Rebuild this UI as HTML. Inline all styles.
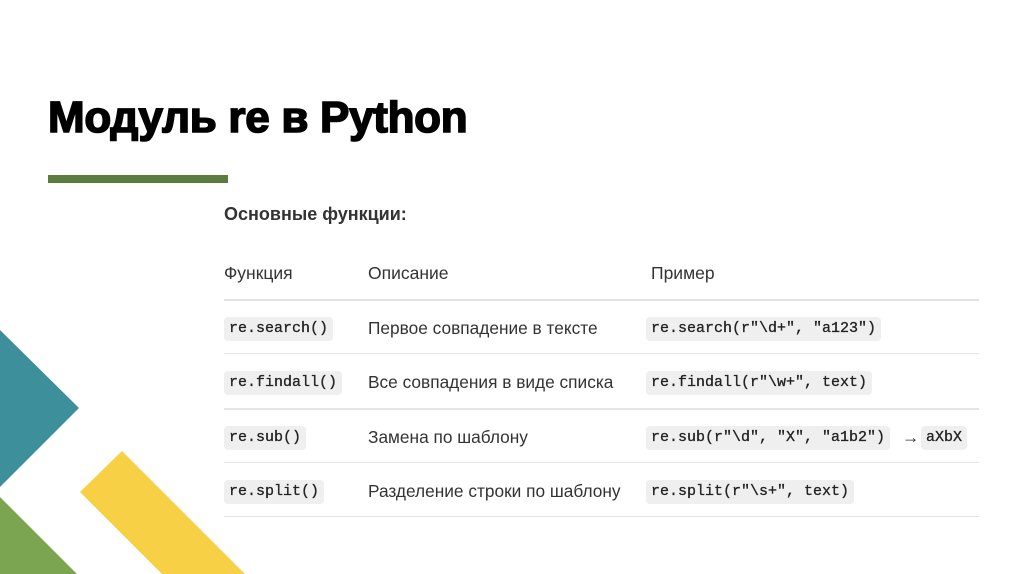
<!DOCTYPE html>
<html><head><meta charset="utf-8"><style>
*{margin:0;padding:0;box-sizing:border-box}
body{width:1024px;height:574px;background:#fff;position:relative;overflow:hidden;font-family:"Liberation Sans","DejaVu Sans",sans-serif;color:#333}
.t{position:absolute;white-space:nowrap}
h1{position:absolute;left:48px;top:96px;font-size:44px;font-weight:bold;color:#000;-webkit-text-stroke:1.6px #000;letter-spacing:-0.3px;white-space:nowrap;line-height:1}
.bar{position:absolute;left:48px;top:175px;width:180px;height:8px;background:#5a7d3f}
.sub{left:224px;top:204px;font-size:18px;font-weight:bold;color:#333}
.h{top:263px;font-size:17.5px;color:#333}
.line{position:absolute;left:224px;width:755px;height:1px;background:#e4e4e4}
.code{position:absolute;font-family:"Liberation Mono",monospace;font-size:15px;background:#efefef;border-radius:4px;padding:3px 5px;color:#222;white-space:nowrap;line-height:18px;-webkit-text-stroke:0.3px #222}
.d{font-size:17.3px;color:#333}
</style></head><body>
<svg width="260" height="574" style="position:absolute;left:0;top:0">
<polygon points="0,330 79,408 0,487" fill="#3d8f9c"/>
<polygon points="0,497 77,574 0,574" fill="#7ca552"/>
<polygon points="122,451 245,574 162,574 80,492" fill="#f7d046"/>
</svg>
<h1>Модуль re в Python</h1>
<div class="bar"></div>
<div class="t sub">Основные функции:</div>
<div class="t h" style="left:224px">Функция</div>
<div class="t h" style="left:368px">Описание</div>
<div class="t h" style="left:651px">Пример</div>
<div class="line" style="top:299px;height:2px"></div>

<div class="code" style="left:224px;top:317px">re.search()</div>
<div class="t d" style="left:368px;top:318px">Первое совпадение в тексте</div>
<div class="code" style="left:646px;top:317px">re.search(r"\d+", "a123")</div>
<div class="line" style="top:353px"></div>

<div class="code" style="left:224px;top:371px">re.findall()</div>
<div class="t d" style="left:368px;top:372px">Все совпадения в виде списка</div>
<div class="code" style="left:646px;top:371px">re.findall(r"\w+", text)</div>
<div class="line" style="top:408px;height:2px"></div>

<div class="code" style="left:224px;top:426px">re.sub()</div>
<div class="t d" style="left:368px;top:427px">Замена по шаблону</div>
<div class="code" style="left:646px;top:426px">re.sub(r"\d", "X", "a1b2")</div>
<div class="t d" style="left:902px;top:427px">→</div>
<div class="code" style="left:921px;top:426px">aXbX</div>
<div class="line" style="top:462px"></div>

<div class="code" style="left:224px;top:480px">re.split()</div>
<div class="t d" style="left:368px;top:481px">Разделение строки по шаблону</div>
<div class="code" style="left:646px;top:480px">re.split(r"\s+", text)</div>
<div class="line" style="top:516px"></div>
</body></html>
